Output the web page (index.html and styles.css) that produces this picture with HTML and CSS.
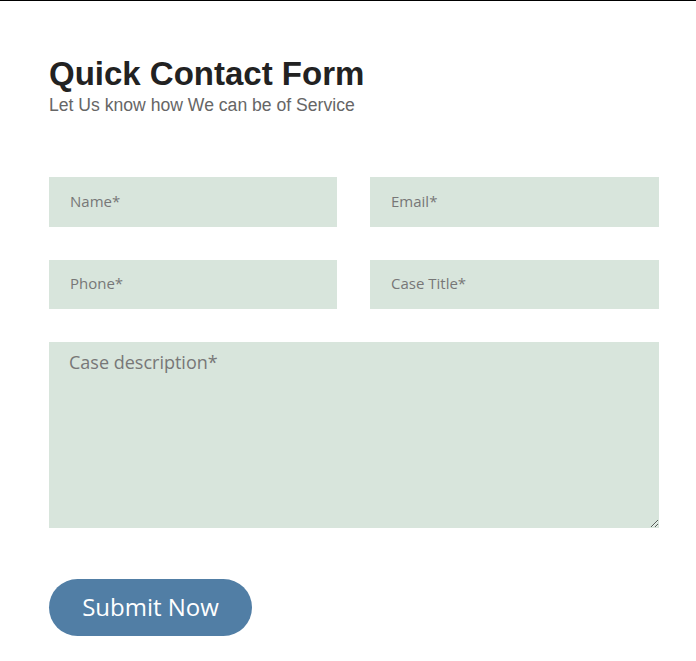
FILE: index.html
```html
<!DOCTYPE html>
<html>
<head>
<meta charset="utf-8">
<link rel="stylesheet" href="styles.css">
</head>
<body>
<div class="topline"></div>
<main class="wrap">
  <header class="head">
    <h1 class="title">Quick Contact Form</h1>
    <p class="subtitle">Let Us know how We can be of Service</p>
  </header>
  <form class="form">
    <div class="grid">
      <input class="field" type="text" placeholder="Name*">
      <input class="field" type="email" placeholder="Email*">
      <input class="field" type="text" placeholder="Phone*">
      <input class="field" type="text" placeholder="Case Title*">
      <textarea class="field area" placeholder="Case description*"></textarea>
    </div>
    <button class="submit" type="button">Submit Now</button>
  </form>
</main>
</body>
</html>
```
FILE: styles.css
```css
html, body { margin: 0; padding: 0; background: #fff; }
.topline { height: 1px; background: #000; }
.wrap { padding: 0 37px 0 49px; }
.head { padding-top: 55px; }
.title {
  margin: 0;
  font-family: "Liberation Sans", Arial, sans-serif;
  font-weight: 700;
  font-size: 33px;
  line-height: 36px;
  color: #222;
}
.subtitle {
  margin: 2px 0 0;
  font-family: "Liberation Sans", Arial, sans-serif;
  font-size: 17.6px;
  line-height: 22px;
  color: #666;
}
.form { padding-top: 61px; }
.grid {
  display: grid;
  grid-template-columns: 288px 289px;
  column-gap: 33px;
  row-gap: 33px;
  width: 610px;
}
.field {
  box-sizing: border-box;
  height: 49.5px;
  border: 0;
  margin: 0;
  padding: 0 20px 2px 21px;
  background: #d8e5dc;
  font-family: "Open Sans", sans-serif;
  font-size: 15px;
  color: #555;
  outline: none;
  border-radius: 0;
}
.field::placeholder { color: #777; opacity: 1; }
.area {
  grid-column: 1 / 3;
  height: 186px;
  padding: 8px 20px;
  font-size: 18px;
  line-height: 24px;
  resize: vertical;
}
.submit {
  margin-top: 51px;
  width: 203px;
  height: 57px;
  border: 0;
  border-radius: 29px;
  background: #517ea5;
  color: #fff;
  font-family: "Open Sans", sans-serif;
  font-size: 24px;
  padding: 0 0 2px;
  cursor: pointer;
}
```
